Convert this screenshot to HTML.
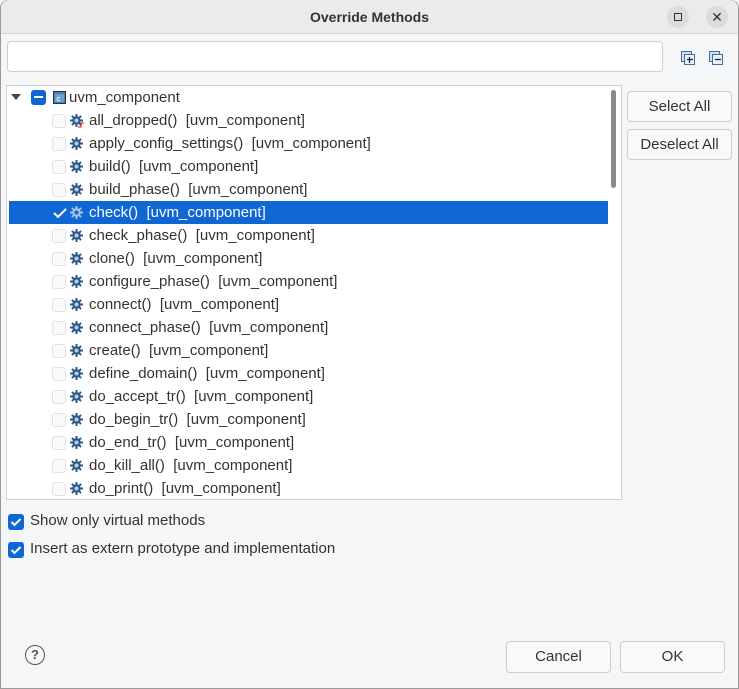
<!DOCTYPE html>
<html><head><style>
*{box-sizing:border-box;margin:0;padding:0}
body{width:739px;height:689px;background:#f5f6f8;font-family:"Liberation Sans",sans-serif;font-size:14px;color:#333;position:relative;overflow:hidden;border:1px solid #9a9a9a;border-radius:8px 8px 0 0}
.title{position:absolute;left:0;top:-1px;width:737px;height:34px;background:#ebebeb;border-bottom:1px solid #d8d8d8;border-radius:8px 8px 0 0;text-align:center;line-height:34px;font-weight:bold;color:#333;font-size:14px}
.wb{position:absolute;top:5px;width:22px;height:22px;border-radius:11px;background:#dcdcdc}
.search{position:absolute;left:6px;top:40px;width:656px;height:31px;background:#fff;border:1px solid #cfcfcf;border-radius:4px}
.tree{position:absolute;left:5px;top:84px;width:616px;height:415px;background:#fff;border:1px solid #cfcfcf;overflow:hidden}
.row{position:absolute;left:2px;height:23px;width:599px;line-height:23px;white-space:nowrap;font-size:15px}
.row.sel{background:#0e67d3;color:#fff}
.cb{position:absolute;left:43px;top:5px;width:14px;height:14px;border:1px solid #e2e2e2;border-radius:3px;background:#fafafa}
.g{position:absolute;left:61px;top:5px}
.t{position:absolute;left:80px}
.sb{position:absolute;left:604px;top:4px;width:5px;height:98px;background:#8a8a8a;border-radius:3px}
.btn{position:absolute;background:#f9f9fa;border:1px solid #cdcdcd;border-radius:4px;text-align:center;color:#333;font-size:15px}
.ck{position:absolute;left:7px;width:16px;height:16px;border-radius:3px;background:#0e67d3}
.lbl{position:absolute;left:29px;font-size:15px}
</style></head><body>
<div class="title">Override Methods</div>
<div class="wb" style="left:666px"><div style="position:absolute;left:7px;top:7px;width:8px;height:8px;border:1px solid #333"></div></div>
<div class="wb" style="left:705px;text-align:center;line-height:22px;font-size:14px;color:#333">✕</div>
<div class="search"></div>
<svg style="position:absolute;left:680px;top:50px" width="14" height="14"><rect x="0.5" y="0.5" width="10" height="10" fill="#cfe0f0" stroke="#3d6fa0"/><rect x="3.5" y="3.5" width="10" height="10" fill="#e8f0f8" stroke="#3d6fa0"/><path d="M6 8.5h6M8.5 6v6" stroke="#123" stroke-width="1.2"/></svg>
<svg style="position:absolute;left:708px;top:50px" width="14" height="14"><rect x="0.5" y="0.5" width="10" height="10" fill="#cfe0f0" stroke="#3d6fa0"/><rect x="3.5" y="3.5" width="10" height="10" fill="#e8f0f8" stroke="#3d6fa0"/><path d="M6 8.5h6" stroke="#123" stroke-width="1.2"/></svg>
<div class="tree">
<div class="row" style="top:0">
<svg style="position:absolute;left:2px;top:8px" width="10" height="6"><path d="M0 0h10L5 6z" fill="#444"/></svg>
<div style="position:absolute;left:22px;top:4px;width:15px;height:15px;background:#0e67d3;border-radius:3px"><div style="position:absolute;left:3px;top:6px;width:9px;height:2px;background:#fff"></div></div>
<svg style="position:absolute;left:44px;top:5px" width="13" height="13"><rect x="0.5" y="0.5" width="12" height="12" fill="#4a7fb0" stroke="#234"/><rect x="2" y="3" width="9" height="8" fill="#6aa0d0"/><text x="3.5" y="10.5" font-size="8" fill="#fff" font-family="Liberation Sans">c</text></svg>
<span class="t" style="left:60px">uvm_component</span></div>
<div id="rows"></div>
<div class="sb"></div>
</div>
<div class="btn" style="left:626px;top:90px;width:105px;height:31px;line-height:29px">Select All</div>
<div class="btn" style="left:626px;top:128px;width:105px;height:31px;line-height:29px">Deselect All</div>
<div class="ck" style="top:513px"><svg width="16" height="16"><path d="M3.5 8l3 3 6-6" stroke="#fff" stroke-width="2" fill="none"/></svg></div>
<div class="lbl" style="top:511px">Show only virtual methods</div>
<div class="ck" style="top:541px"><svg width="16" height="16"><path d="M3.5 8l3 3 6-6" stroke="#fff" stroke-width="2" fill="none"/></svg></div>
<div class="lbl" style="top:539px">Insert as extern prototype and implementation</div>
<div style="position:absolute;left:24px;top:644px;width:20px;height:20px;border:1.5px solid #555;border-radius:10px;text-align:center;line-height:18px;font-weight:bold;color:#555;font-size:13px">?</div>
<div class="btn" style="left:505px;top:640px;width:105px;height:32px;line-height:30px">Cancel</div>
<div class="btn" style="left:619px;top:640px;width:105px;height:32px;line-height:30px">OK</div>
<script>
var n=["all_dropped","apply_config_settings","build","build_phase","check","check_phase","clone","configure_phase","connect","connect_phase","create","define_domain","do_accept_tr","do_begin_tr","do_end_tr","do_kill_all","do_print"];
function gear(c,k){return '<svg class="g" width="13" height="13" viewBox="0 0 13 13"><g fill="'+c+'"><circle cx="6.5" cy="6.5" r="4.2"/><rect x="5.5" y="0" width="2" height="13"/><rect x="0" y="5.5" width="13" height="2"/><rect x="5.5" y="0" width="2" height="13" transform="rotate(45 6.5 6.5)"/><rect x="5.5" y="0" width="2" height="13" transform="rotate(-45 6.5 6.5)"/></g><circle cx="6.5" cy="6.5" r="2" fill="'+k+'"/></svg>';}
var h='';
n.forEach(function(s,i){var sel=s=="check";h+='<div class="row'+(sel?' sel':'')+'" style="top:'+(23*(i+1))+'px">'+(sel?'<svg style="position:absolute;left:44px;top:6px" width="14" height="12"><path d="M1 6l4 4 8-8" stroke="#fff" stroke-width="2" fill="none"/></svg>':'<div class="cb"></div>')+(sel?gear("#a8c4e4","#0e67d3"):gear("#2a5a8a","#bcd"))+(i==0?'<svg style="position:absolute;left:69px;top:13px" width="6" height="6"><path d="M0 5h3V1h3" stroke="#e00" fill="none"/></svg>':'')+'<span class="t">'+s+'()&nbsp; [uvm_component]</span></div>';});
document.getElementById('rows').outerHTML=h;
</script>
</body></html>
